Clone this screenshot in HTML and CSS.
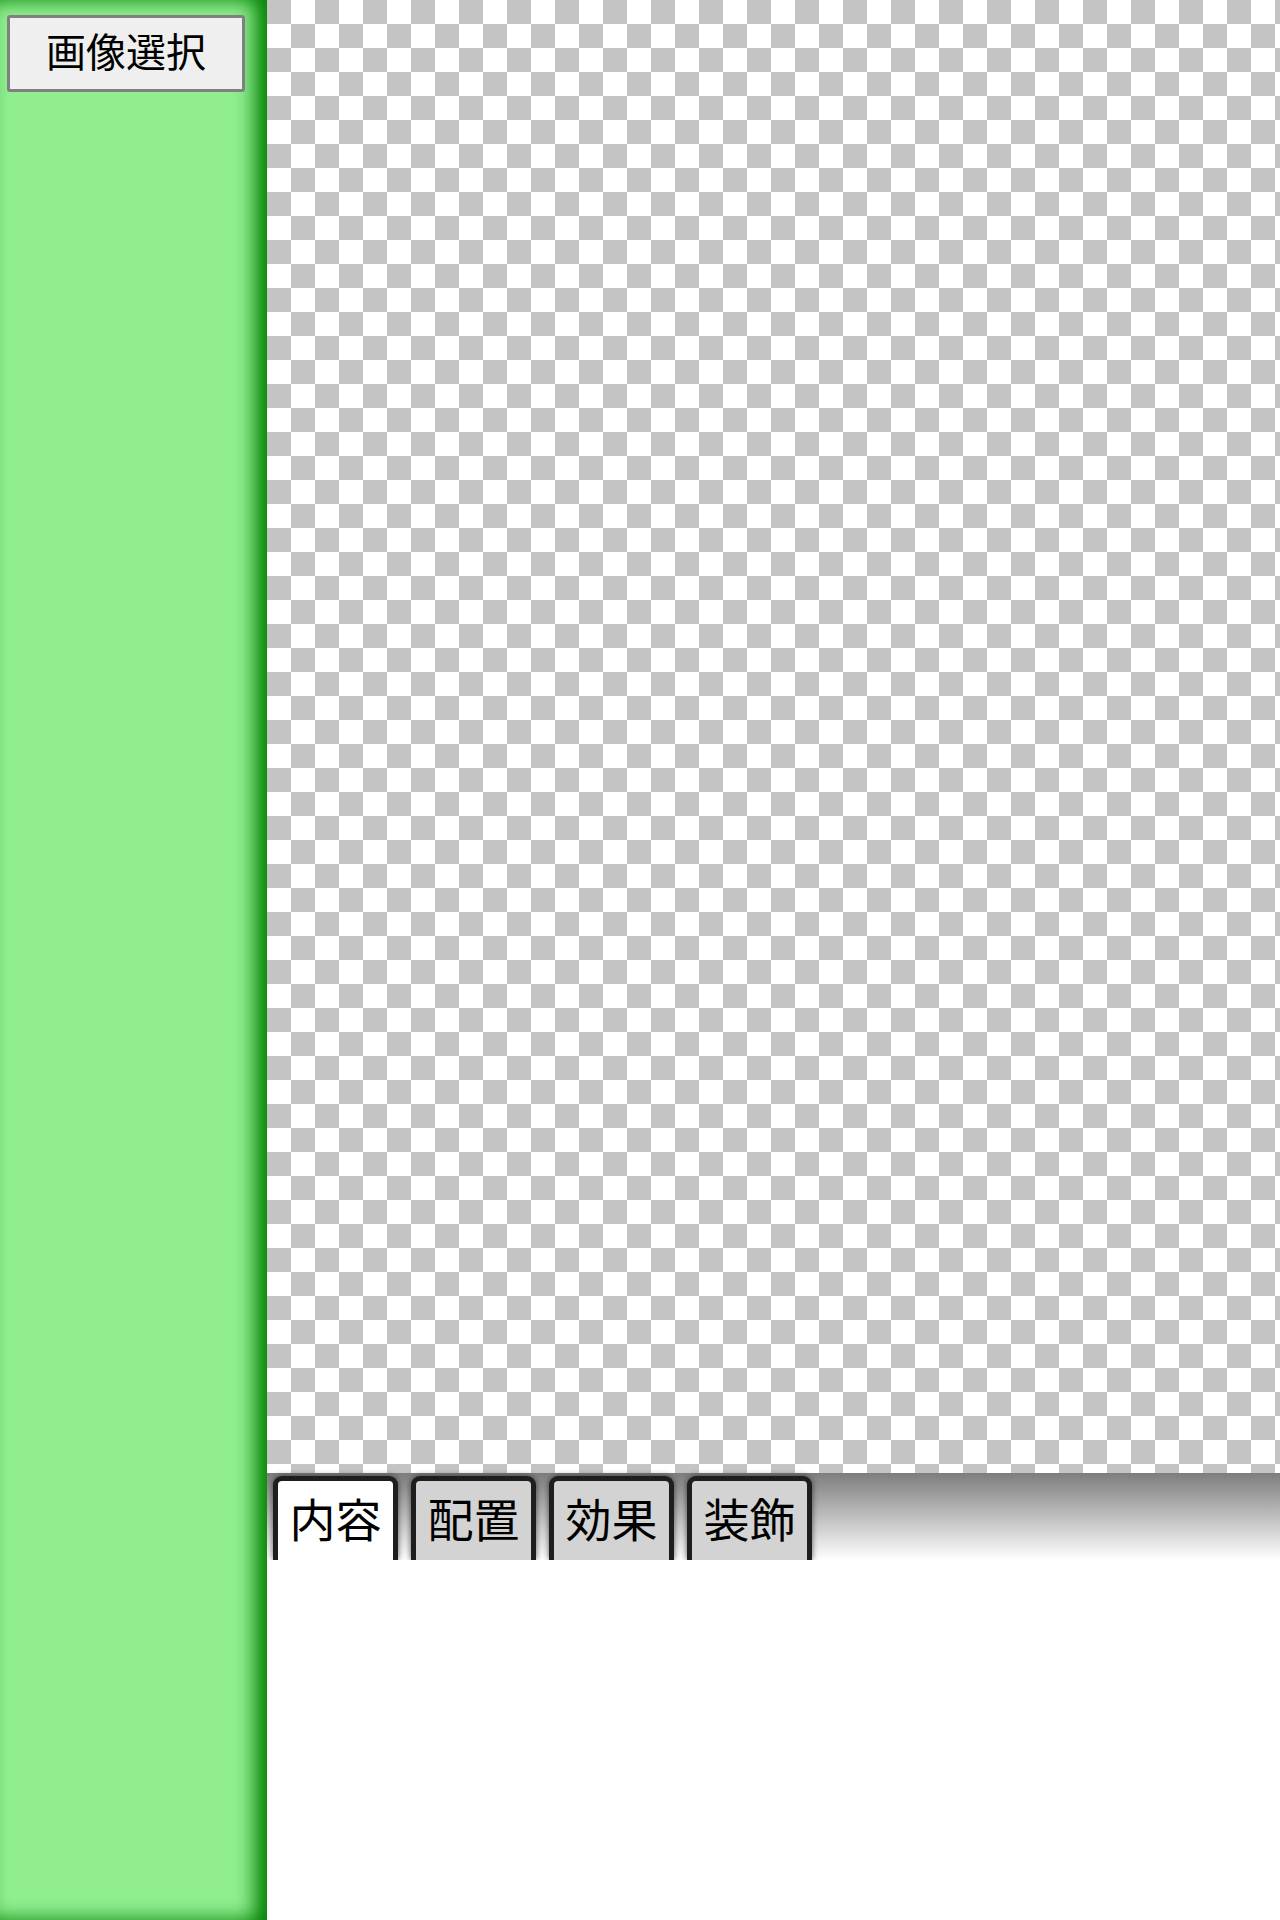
FILE: index.html
```html
<!DOCTYPE html>
<html lang="ja">
<head>
<meta charset="utf-8">
<title>画像編集</title>
<link rel="stylesheet" href="styles.css">
</head>
<body>
<div class="app">
  <aside class="sidebar">
    <button class="pick">画像選択</button>
  </aside>
  <main class="main">
    <div class="canvas"></div>
    <div class="tabbar">
      <div class="tab active">内容</div>
      <div class="tab">配置</div>
      <div class="tab">効果</div>
      <div class="tab">装飾</div>
    </div>
    <div class="panel"></div>
  </main>
</div>
</body>
</html>
```

FILE: styles.css
```css
html, body {
  margin: 0;
  padding: 0;
  background: #fff;
  font-family: "Noto Sans CJK JP", "Noto Sans", sans-serif;
}
.app {
  display: flex;
  width: 1280px;
  height: 1920px;
}
.sidebar {
  width: 267px;
  flex: none;
  background: #90ee90;
  box-shadow: inset -12px 0 20px #008000;
  padding: 15px 0 0 7px;
  box-sizing: border-box;
}
.pick {
  width: 238px;
  height: 77px;
  box-sizing: border-box;
  border: 3px solid #808080;
  border-radius: 3px;
  background: #efefef;
  font-family: "Noto Sans CJK JP", sans-serif;
  font-size: 40px;
  line-height: 1;
  color: #000;
  padding: 0 0 8px 0;
  margin: 0;
}
.main {
  flex: 1;
  display: flex;
  flex-direction: column;
}
.canvas {
  height: 1473px;
  flex: none;
  background: conic-gradient(#fff 25%, #c4c4c4 0 50%, #fff 0 75%, #c4c4c4 0) 0 0 / 48px 48px;
}
.tabbar {
  height: 87px;
  flex: none;
  box-sizing: border-box;
  padding: 3px 0 0 6px;
  display: flex;
  align-items: flex-end;
  gap: 13px;
  background: linear-gradient(#7d7d7d, #ffffff);
}
.tab {
  width: 125px;
  height: 84px;
  box-sizing: border-box;
  border: 5px solid #1e1e1e;
  border-bottom: none;
  border-radius: 9px 9px 0 0;
  background: #d3d3d3;
  box-shadow: 0 0 6px rgba(0,0,0,0.6);
  display: flex;
  align-items: center;
  justify-content: center;
  font-size: 46px;
  line-height: 1;
  color: #000;
  padding: 0 0 8px 0;
}
.tab.active {
  background: #fff;
}
.panel {
  flex: 1;
  background: #fff;
}
```
